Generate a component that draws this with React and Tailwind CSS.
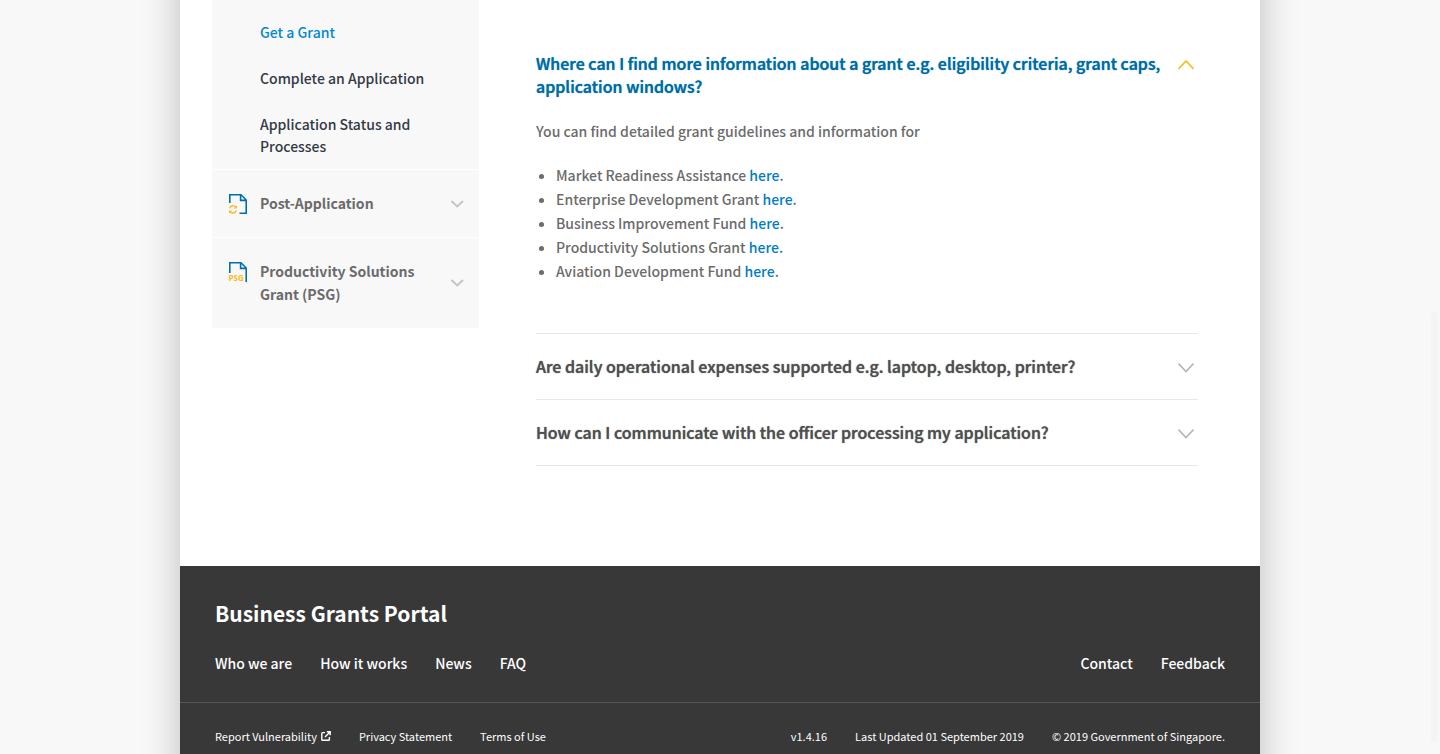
const grants = [
  { name: 'Market Readiness Assistance' },
  { name: 'Enterprise Development Grant' },
  { name: 'Business Improvement Fund' },
  { name: 'Productivity Solutions Grant', linkedStop: true },
  { name: 'Aviation Development Fund' },
];

const questions = [
  'Are daily operational expenses supported e.g. laptop, desktop, printer?',
  'How can I communicate with the officer processing my application?',
];

function SmallChevron() {
  return (
    <svg aria-hidden="true" className="h-2 w-3 shrink-0 overflow-visible" viewBox="0 0 12 8" fill="none" stroke="#c4c4c4" strokeWidth="2">
      <path d="M0.4 1 6.2 6.4 12 1" />
    </svg>
  );
}

function LargeChevron({ up }) {
  return (
    <svg
      aria-hidden="true"
      className="mx-1 mt-2 h-[10px] w-4 shrink-0"
      viewBox="0 0 16 10"
      fill="none"
      stroke={up ? '#ffb81c' : '#b5b5b5'}
      strokeWidth="1.6"
    >
      <path d={up ? 'M0.5 9 8 1 15.5 9' : 'M0.5 0.6 8 8.6 15.5 0.6'} />
    </svg>
  );
}

function PostIcon() {
  return (
    <svg aria-hidden="true" className="h-5 w-[18px] shrink-0" viewBox="0 0 18 20" fill="none">
      <path d="M0.8 9V0.8H12L17.2 6V19.2H10.5M11.6 0.8V6.4H17.2" stroke="#0071ad" strokeWidth="1.6" />
      <path d="M0.7 14.3C1.3 11.4 4.8 10.8 6.7 13M7.3 16.4C6.7 19.2 3.2 19.8 1.3 17.7" stroke="#ffb81c" strokeWidth="1.4" />
      <path d="M8 11.2V14.4H4.9ZM0 19.6V16.4H3.1Z" fill="#ffb81c" />
    </svg>
  );
}

function PsgIcon() {
  return (
    <svg aria-hidden="true" className="h-5 w-[18px] shrink-0 overflow-visible" viewBox="0 0 18 20" fill="none">
      <path d="M0.8 11V0.8H12L17.2 6V20M11.6 0.8V6.4H17.2" stroke="#0071ad" strokeWidth="1.6" />
      <text x="-0.5" y="19" fill="#ffb81c" className="font-['Open_Sans',sans-serif] text-[8px] font-bold">
        PSG
      </text>
    </svg>
  );
}

function ExternalIcon() {
  return (
    <svg aria-hidden="true" className="h-[10px] w-[10px]" viewBox="0 0 10 10" fill="none" stroke="#fff" strokeWidth="1.4">
      <path d="M4 1.6H1.6Q0.8 1.6 0.8 2.4V8.4Q0.8 9.2 1.6 9.2H7.6Q8.4 9.2 8.4 8.4V6M5.8 0.8H9.2V4.2M9 1 4 6" />
    </svg>
  );
}

function SidebarItem({ icon, children }) {
  return (
    <button type="button" className="flex w-full gap-3 border-t border-white px-4 py-[22px] text-left text-[14px] leading-[23px] font-bold text-[#6b6b6b]">
      <span className="flex w-5 shrink-0 pt-0.5 pl-px">{icon}</span>
      <span className="flex-1">{children}</span>
      <span className="flex self-center">
        <SmallChevron />
      </span>
    </button>
  );
}

export default function App() {
  return (
    <div className="min-h-screen overflow-hidden bg-[#f8f8f8] font-['Noto_Sans_CJK_SC','Noto_Sans',sans-serif]">
      <div className="mx-auto -mt-12 max-w-[1080px] bg-white pt-12 shadow-[0_0_36px_rgba(0,0,0,0.24)]">
        <div className="flex items-start gap-[57px] pr-[62px] pb-[100px] pl-8">
          <aside className="w-[267px] shrink-0 bg-[#f8f8f8]">
            <nav aria-label="FAQ topics">
              <ul className="flex flex-col gap-6 pt-[21px] pr-10 pb-3 pl-12 text-[14px] leading-[22px] font-medium text-[#323a45]">
                <li><a href="#get-a-grant" aria-current="page" className="text-[#0088d1]">Get a Grant</a></li>
                <li><a href="#complete">Complete an Application</a></li>
                <li><a href="#status">Application Status and Processes</a></li>
              </ul>
              <SidebarItem icon={<PostIcon />}>Post-Application</SidebarItem>
              <SidebarItem icon={<PsgIcon />}>Productivity Solutions Grant (PSG)</SidebarItem>
            </nav>
          </aside>

          <main className="min-w-0 flex-1 pt-[52px]">
            <section className="border-b border-[#e8e8e8] pb-[50px]">
              <h2>
                <button type="button" aria-expanded="true" className="flex w-full items-start text-left text-[16px] leading-[23px] font-medium text-[#006ba6] [text-shadow:0_0_1px_currentColor]">
                  <span className="flex-1">Where can I find more information about a grant e.g. eligibility criteria, grant caps, application windows?</span>
                  <LargeChevron up />
                </button>
              </h2>
              <div className="mt-[21px] text-[14px] leading-6 font-medium text-[#6b6b6b]">
                <p>You can find detailed grant guidelines and information for</p>
                <ul className="mt-5 list-disc pl-5">
                  {grants.map((g) => (
                    <li key={g.name}>
                      {g.name} <a href="#guidelines" className="text-[#007dc3]">{g.linkedStop ? 'here.' : 'here'}</a>
                      {!g.linkedStop && '.'}
                    </li>
                  ))}
                </ul>
              </div>
            </section>
            {questions.map((q) => (
              <h2 key={q} className="border-b border-[#e8e8e8]">
                <button type="button" aria-expanded="false" className="flex w-full items-start py-[21px] text-left text-[16px] leading-[23px] font-medium text-[#505050] [text-shadow:0_0_1px_currentColor]">
                  <span className="flex-1">{q}</span>
                  <LargeChevron />
                </button>
              </h2>
            ))}
          </main>
        </div>

        <footer className="bg-[#383838] text-white">
          <div className="px-[35px] pt-[31px] pb-[27px]">
            <h2 className="text-[21px] leading-8 font-bold">Business Grants Portal</h2>
            <nav aria-label="Footer" className="mt-[22px] flex justify-between text-[14px] leading-6 font-medium">
              <div className="flex gap-7">
                <a href="#who">Who we are</a>
                <a href="#how">How it works</a>
                <a href="#news">News</a>
                <a href="#faq">FAQ</a>
              </div>
              <div className="flex gap-7">
                <a href="#contact">Contact</a>
                <a href="#feedback">Feedback</a>
              </div>
            </nav>
          </div>
          <div className="flex justify-between border-t border-[#555] px-[35px] pt-[23px] pb-12 text-[11px] leading-5">
            <div className="flex gap-7">
              <a href="#report" className="flex items-center gap-1">Report Vulnerability <ExternalIcon /></a>
              <a href="#privacy">Privacy Statement</a>
              <a href="#terms">Terms of Use</a>
            </div>
            <div className="flex gap-7">
              <span>v1.4.16</span>
              <span>Last Updated 01 September 2019</span>
              <span>© 2019 Government of Singapore.</span>
            </div>
          </div>
        </footer>
      </div>
      <div aria-hidden="true" className="fixed top-[312px] right-[2px] bottom-3 w-[7px] rounded-full bg-[#f4f4f4]" />
    </div>
  );
}
